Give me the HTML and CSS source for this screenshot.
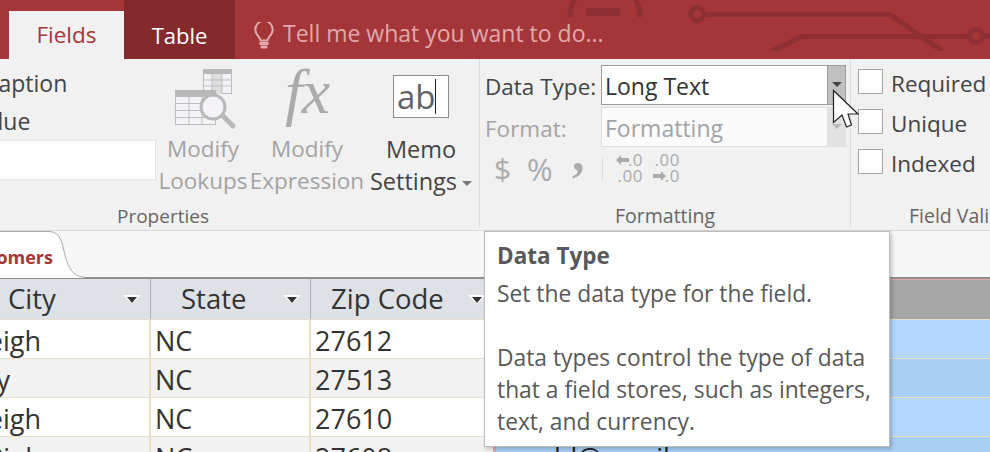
FILE: index.html
```html
<!DOCTYPE html>
<html lang="en">
<head>
<meta charset="utf-8">
<title>Data Type</title>
<link rel="stylesheet" href="styles.css">
</head>
<body>
<div class="app">
  <header class="titlebar">
    <div class="edge"></div>
    <div class="tab tab-active">Fields</div>
    <div class="tab tab-dark">Table</div>
    <div class="tell">
      <svg class="bulb" width="20" height="27" viewBox="0 0 20 27"><path d="M6.500 18.500c0-3-5.200-5.500-5.200-11a8.700 8.700 0 0 1 17.400 0c0 5.500-5.200 8-5.200 11z" fill="none" stroke="#e2a9ab" stroke-width="2"/><rect x="5.500" y="20" width="9" height="3" fill="#e2a9ab"/><rect x="6.500" y="23.500" width="7" height="3" rx="1" fill="#e2a9ab"/></svg>
      <span>Tell me what you want to do...</span>
    </div>
    <svg class="circuit" width="755" height="51" viewBox="235 0 755 51">
      <g fill="none" stroke="#8e3033" stroke-width="5">
        <path d="M570 17a35 35 0 0 1 70 0"/>
        <circle cx="697" cy="14" r="6.500"/>
        <path d="M703 14.500H890L942 51"/>
        <path d="M772 51L802 36.500H970"/>
        <circle cx="976" cy="36" r="6.500"/>
        <path d="M982 36H990"/>
      </g>
      <rect x="586" y="8" width="34" height="8" fill="#8e3033"/>
    </svg>
  </header>

  <section class="ribbon">
    <div class="group group-props">
      <div class="group-body">
        <div class="prop-col">
          <div class="prop-line">Caption</div>
          <div class="prop-line">Value</div>
          <div class="prop-input"></div>
        </div>
        <div class="big-btn btn-lookups disabled">
          <svg class="big-icon" width="64" height="62" viewBox="0 0 64 62">
            <rect x="28.500" y="0.500" width="28" height="24" fill="#f5f2f7" stroke="#bdbdbd" stroke-width="1"/>
            <rect x="28" y="0" width="29" height="5" fill="#b8b8b8"/>
            <rect x="37" y="5" width="10" height="20" fill="#e0dde0"/>
            <path d="M28 11h29M28 17h29M37 5v20M47 5v20" stroke="#bdbdbd" fill="none"/>
            <rect x="0.500" y="21.500" width="40" height="34" fill="#f5f2f7" stroke="#bdbdbd" stroke-width="1"/>
            <rect x="0" y="21" width="41" height="7" fill="#b8b8b8"/>
            <path d="M0 34.500h41M0 41.500h41M0 48.500h41M14 28v27M27 28v27" stroke="#bdbdbd" fill="none"/>
            <path d="M48 47l10 10" stroke="#b8b8b8" stroke-width="5" stroke-linecap="round"/>
            <circle cx="38" cy="38" r="12" fill="#f5f2f7" stroke="#b8b8b8" stroke-width="3"/>
          </svg>
          <span>Modify</span><span>Lookups</span>
        </div>
        <div class="big-btn btn-expr disabled">
          <div class="fx">fx</div>
          <span>Modify</span><span>Expression</span>
        </div>
        <div class="big-btn btn-memo">
          <div class="memo-box"><span class="memo-ab">ab</span><i class="memo-caret"></i></div>
          <span>Memo</span><span>Settings<b class="mini-arrow"></b></span>
        </div>
      </div>
      <div class="group-label props-label">Properties</div>
    </div>

    <div class="group group-format">
      <div class="group-body format-body">
        <div class="format-row">
          <label class="format-label">Data Type:</label>
          <div class="combo"><span class="combo-text">Long Text</span><span class="combo-btn"><b class="combo-arrow"></b></span></div>
        </div>
        <div class="format-row disabled">
          <label class="format-label">Format:</label>
          <div class="combo combo-off"><span class="combo-text">Formatting</span><span class="combo-btn"><b class="combo-arrow"></b></span></div>
        </div>
        <div class="num-row">
          <span class="sym sym-dollar">$</span>
          <span class="sym sym-pct">%</span>
          <span class="sym sym-comma">,</span>
          <i class="num-sep"></i>
          <div class="dec">
            <span><svg class="dec-arrow" width="13" height="10" viewBox="0 0 13 10"><path d="M5 0L0 5l5 5V7h8V3H5z" fill="#ababab"/></svg>.0</span>
            <span>.00</span>
          </div>
          <div class="dec dec-2">
            <span>.00</span>
            <span><svg class="dec-arrow" width="13" height="10" viewBox="0 0 13 10"><path d="M8 0l5 5-5 5V7H0V3h8z" fill="#ababab"/></svg>.0</span>
          </div>
        </div>
      </div>
      <div class="group-label">Formatting</div>
    </div>

    <div class="group group-valid">
      <div class="group-body valid-body">
        <div class="check"><i class="box"></i><span>Required</span></div>
        <div class="check"><i class="box"></i><span>Unique</span></div>
        <div class="check"><i class="box"></i><span>Indexed</span></div>
      </div>
      <div class="group-label valid-label">Field Validation</div>
    </div>
  </section>

  <section class="doc-tabs">
    <div class="doc-tab">
      <svg class="doc-curve" width="84" height="47" viewBox="0 0 84 47"><path d="M0 0.500H48C58 0.500 61 6 64 20C67 34 72 46 84 46V47H0Z" fill="#fff"/><path d="M0 0.500H48C58 0.500 61 6 64 20C67 34 72 46 84 46" fill="none" stroke="#a9a9a9"/></svg>
      <span class="doc-name">Customers</span>
    </div>
  </section>

  <section class="sheet">
    <div class="row head">
      <div class="cell c1">City<b class="sort"></b></div>
      <div class="cell c2">State<b class="sort"></b></div>
      <div class="cell c3">Zip Code<b class="sort"></b></div>
      <div class="cell c4"></div>
    </div>
    <div class="row">
      <div class="cell c1 cut">Raleigh</div><div class="cell c2">NC</div><div class="cell c3">27612</div><div class="cell c4"></div>
    </div>
    <div class="row alt">
      <div class="cell c1 cut cut-cary">Cary</div><div class="cell c2">NC</div><div class="cell c3">27513</div><div class="cell c4"></div>
    </div>
    <div class="row">
      <div class="cell c1 cut">Raleigh</div><div class="cell c2">NC</div><div class="cell c3">27610</div><div class="cell c4"></div>
    </div>
    <div class="row alt">
      <div class="cell c1 cut cut-last">Rial</div><div class="cell c2">NC</div><div class="cell c3">27608</div><div class="cell c4 mail">ld@gmail.com</div>
    </div>
  </section>

  <aside class="tooltip">
    <h4>Data Type</h4>
    <p>Set the data type for the field.</p>
    <p>Data types control the type of data that a field stores, such as integers, text, and currency.</p>
  </aside>

  <svg class="cursor" width="32" height="42" viewBox="0 0 32 42"><path d="M1.500 1.500V33.500L10 26L14.500 38L19.500 36L16 25H26Z" fill="#fff" stroke="#222" stroke-width="1.200"/></svg>
</div>
</body>
</html>
```
FILE: styles.css
```css
* { box-sizing: border-box; }
html, body { margin: 0; padding: 0; }
body { width: 990px; height: 452px; overflow: hidden; font-family: "Open Sans", "Noto Sans", sans-serif; color: #444; background: #fff; }
.app { position: relative; width: 990px; height: 452px; overflow: hidden; display: flex; flex-direction: column; }

.titlebar { height: 59px; flex: none; display: flex; align-items: flex-end; background: #a43538; position: relative; }
.edge { width: 9px; }
.tab { height: 48px; display: flex; align-items: center; justify-content: center; font-size: 22.500px; padding-bottom: 1px; }
.tab-active { width: 115px; background: #f1f1f1; color: #a4373a; padding-bottom: 2px; }
.tab-dark { width: 111px; height: 59px; padding-top: 11px; background: #842a2c; color: #fff; font-size: 22px; position: relative; z-index: 1; }
.tell { display: flex; align-items: center; gap: 9px; height: 59px; padding: 7px 0 0 19px; color: #e2a9ab; font-size: 23px; position: relative; z-index: 1; }
.bulb { flex: none; margin-top: 4px; }
.circuit { position: absolute; left: 235px; top: 0; }

.ribbon { height: 172px; flex: none; display: flex; background: #f1f1f1; border-bottom: 1px solid #d8d8d8; overflow: hidden; }
.group { display: flex; flex-direction: column; height: 168px; flex: none; }
.group-body { flex: 1; display: flex; min-height: 0; }
.group-label { height: 27px; text-align: center; font-size: 19.500px; color: #666; line-height: 32px; white-space: nowrap; }
.props-label { width: 326px; font-size: 19px; }
.group-props { width: 480px; border-right: 1px solid #dedede; }
.group-format { width: 371px; border-right: 1px solid #dedede; }
.group-valid { width: 139px; }
.valid-label { text-align: left; padding-left: 58px; }

.prop-col { width: 156px; flex: none; overflow: hidden; display: flex; flex-direction: column; padding-top: 5px; }
.prop-line { height: 38px; line-height: 38px; font-size: 23px; white-space: nowrap; color: #444; }
.prop-line:nth-child(1) { margin-left: -16px; }
.prop-line:nth-child(2) { margin-left: -29px; }
.prop-input { height: 40px; background: #fff; border: 1px solid #e2e2e2; border-left: 0; }

.big-btn { display: flex; flex-direction: column; align-items: center; font-size: 22.500px; line-height: 32px; flex: none; white-space: nowrap; color: #444; }
.big-btn > span { height: 32px; }
.disabled, .disabled .format-label { color: #a3a3a3; }
.btn-lookups { width: 92px; margin-left: 1px; }
.big-icon { margin: 10px 0 2px 8px; flex: none; height: 62px; }
.btn-expr { width: 112px; margin-left: 2px; }
.fx { height: 74px; font-family: "Liberation Serif", serif; font-style: italic; font-size: 64px; line-height: 66px; color: #ababab; letter-spacing: -1px; }
.btn-memo { width: 116px; font-size: 23.500px; }
.memo-box { width: 56px; height: 43px; margin: 16px 0 15px; background: #fff; border: 1px solid #8c8c8c; display: flex; align-items: center; padding-left: 3px; }
.memo-ab { font-size: 33px; line-height: 38px; width: 38px; flex: none; color: #636363; }
.memo-caret { width: 1px; height: 35px; background: #222; }
.mini-arrow { display: inline-block; vertical-align: middle; margin-left: 5px; border: 5px solid transparent; border-top: 5px solid #777; border-bottom: 0; }

.format-body { flex-direction: column; padding: 6px 0 0 5px; }
.format-row { display: flex; align-items: flex-start; height: 42px; }
.format-label { width: 116px; font-size: 22.500px; line-height: 44px; white-space: nowrap; flex: none; color: #444; }
.combo { width: 245px; height: 40px; display: flex; background: #fff; border: 1px solid #9c9c9c; }
.combo-text { flex: 1; padding-left: 3px; font-size: 23px; line-height: 40px; color: #333; }
.combo-btn { width: 18px; background: #c0c0c0; border-left: 1px solid #9c9c9c; display: flex; justify-content: center; padding-top: 16px; }
.combo-arrow { width: 0; height: 0; border: 5px solid transparent; border-top: 5px solid #444; border-bottom: 0; }
.combo-off { background: #fbfbfb; border-color: #e0e0e0; }
.combo-off .combo-text { color: #a3a3a3; }
.combo-off .combo-btn { background: #e2e2e2; border-color: #e2e2e2; }
.combo-off .combo-arrow { border-top-color: #b8b8b8; }

.num-row { display: flex; align-items: center; height: 40px; color: #ababab; padding-left: 9px; }
.sym { font-size: 30px; line-height: 40px; font-weight: 400; }
.sym-dollar { width: 33px; }
.sym-pct { width: 45px; font-size: 31px; }
.sym-comma { width: 30px; font-family: "Liberation Serif", serif; font-weight: 700; font-size: 50px; line-height: 30px; height: 50px; margin-top: -12px; }
.num-sep { width: 1px; height: 22px; background: #dcdcdc; margin-right: 11px; }
.dec { display: flex; flex-direction: column; align-items: flex-end; font-size: 17px; line-height: 16px; letter-spacing: 0.500px; width: 29px; padding-bottom: 2px; }
.dec > span { display: flex; align-items: center; }
.dec-arrow { flex: none; margin-right: -1px; }
.dec-2 { margin-left: 9px; width: 28px; }

.valid-body { flex-direction: column; padding: 10px 0 0 7px; gap: 15px; }
.check { display: flex; align-items: center; height: 25px; font-size: 22.500px; color: #444; white-space: nowrap; }
.check span { padding-top: 3px; }
.box { width: 25px; height: 25px; margin-right: 8px; background: #fff; border: 1px solid #a6a6a6; flex: none; }

.doc-tabs { height: 48px; flex: none; display: flex; background: #f7f7f7; border-bottom: 2px solid #8e8e8e; }
.doc-tab { position: relative; width: 84px; height: 47px; padding-right: 31px; direction: rtl; overflow: hidden; white-space: nowrap; color: #a4373a; font-size: 18px; font-weight: 700; line-height: 52px; }
.doc-name { position: relative; }
.doc-curve { position: absolute; left: 0; top: 0; }

.sheet { flex: 1; display: flex; flex-direction: column; }
.row { height: 39px; flex: none; display: flex; background: #fff; border-bottom: 1px solid #e8dfc8; }
.row.alt { background: #f2f2f2; }
.cell { font-size: 27px; line-height: 42px; color: #333; height: 38px; flex: none; border-right: 2px solid #e8dfc8; padding-left: 4px; position: relative; white-space: nowrap; overflow: hidden; }
.c1 { width: 151px; }
.c2 { width: 160px; }
.c3 { width: 182px; border-right: 0; }
.c4 { flex: 1; background: #b3d7ff; border-right: 0; border-left: 3px solid #e5a7ab; color: #222; padding-left: 58px; }
.row.alt .c4 { background: #aacff5; }
.cut { direction: rtl; padding-right: 108px; padding-left: 0; }
.cut-cary { padding-right: 139px; }
.cut-last { padding-right: 117px; }
.head { height: 41px; background: #dee1e6; border-bottom: 1px solid #e8dfc8; }
.head .cell { height: 40px; border-right: 1px solid #a9adb5; font-size: 27.500px; line-height: 40px; }
.head .c1 { padding-left: 8px; width: 151px; }
.head .c2 { padding-left: 30px; width: 160px; }
.head .c3 { padding-left: 20px; border-right: 0; }
.head .c4 { background: #a6a6a6; border: 0; border-top: 1px solid #e5a7ab; }
.sort { position: absolute; right: 9px; top: 16px; width: 18px; height: 10px; }
.head .c3 .sort { right: 7px; }
.sort::before { content: ""; position: absolute; left: 0; top: 0; border: 9px solid transparent; border-top: 9px solid #fff; border-bottom: 0; }
.sort::after { content: ""; position: absolute; left: 4px; top: 2px; border: 5px solid transparent; border-top: 6px solid #333; border-bottom: 0; }

.tooltip { position: absolute; left: 484px; top: 231px; width: 406px; height: 216px; background: #fff; border: 1px solid #bcbcbc; box-shadow: 2px 2px 4px rgba(0,0,0,.22); padding: 8px 10px 0 12px; color: #595959; font-size: 22.800px; line-height: 32px; }
.tooltip h4 { margin: 0 0 6px; font-size: 22.500px; font-weight: 700; line-height: 32px; }
.tooltip p { margin: 0 0 32px; }

.cursor { position: absolute; left: 832px; top: 89px; }
```
